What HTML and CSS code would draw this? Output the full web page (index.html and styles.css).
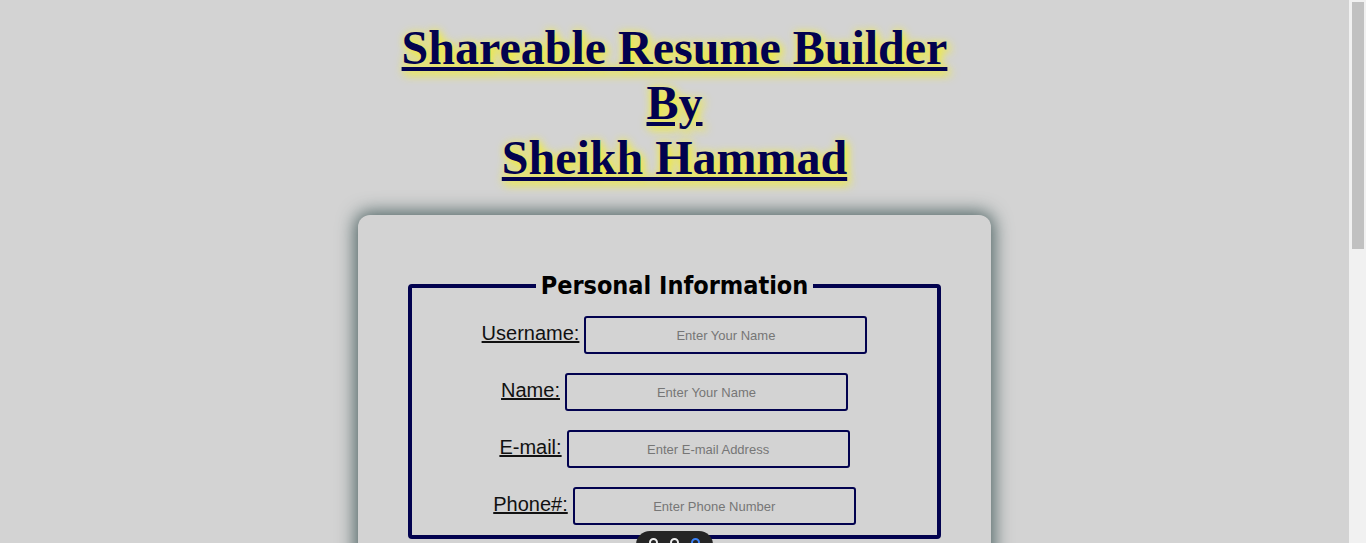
FILE: index.html
```html
<!DOCTYPE html>
<html lang="en">
<head>
    <meta charset="UTF-8">
    <meta name="viewport" content="width=device-width, initial-scale=1.0">
    <title>Shareable Resume Builder</title>
    <link rel="stylesheet" href="styles.css">
</head>
<body>
    <h1 class="title">Shareable Resume Builder<br>By<br>Sheikh Hammad</h1>
    <div class="container">
        <form id="resumeForm">
            <fieldset>
                <legend>Personal Information</legend>
                <div class="row">
                    <label for="username">Username:</label>
                    <input type="text" id="username" placeholder="Enter Your Name">
                </div>
                <div class="row">
                    <label for="name">Name:</label>
                    <input type="text" id="name" placeholder="Enter Your Name">
                </div>
                <div class="row">
                    <label for="email">E-mail:</label>
                    <input type="email" id="email" placeholder="Enter E-mail Address">
                </div>
                <div class="row">
                    <label for="phone">Phone#:</label>
                    <input type="tel" id="phone" placeholder="Enter Phone Number">
                </div>
            </fieldset>
            <fieldset>
                <legend>Education</legend>
                <div class="row">
                    <label for="degree">Degree:</label>
                    <input type="text" id="degree" placeholder="Enter Your Degree">
                </div>
                <div class="row">
                    <label for="school">School:</label>
                    <input type="text" id="school" placeholder="Enter School Name">
                </div>
            </fieldset>
        </form>
    </div>
    <div class="widget">
        <span class="dot"></span><span class="dot"></span><span class="dot blue"></span>
    </div>
    <div class="scrollbar"><div class="thumb"></div></div>
</body>
</html>
```
FILE: styles.css
```css
body {
    background-color: lightgray;
    margin: 8px 25px 8px 8px;
    font-family: 'Liberation Sans', Arial, sans-serif;
}
.title {
    font-family: 'Liberation Serif', 'Times New Roman', serif;
    font-size: 48px;
    font-weight: bold;
    line-height: 55px;
    text-align: center;
    color: #02024f;
    text-decoration: underline;
    text-shadow: 3px 4px 10px #f2ee2c, 0 0 8px #ebe760;
    margin: 12px 0 30px;
}
.container {
    width: 533px;
    margin: 0 auto 60px;
    padding: 56px 50px 40px;
    border-radius: 12px;
    box-shadow: 0 0 18px 3px #4e6464;
    background-color: lightgray;
}
fieldset {
    border: 4px solid #02024f;
    border-radius: 4px;
    margin: 0 0 30px;
    padding: 16px 0 10px;
    display: flex;
    flex-direction: column;
    align-items: center;
    gap: 19px;
}
legend {
    font-family: Tahoma, 'DejaVu Sans Condensed', 'DejaVu Sans', sans-serif;
    font-weight: bold;
    font-size: 25px;
    margin: 0 auto;
    padding: 0 5px;
    color: #000;
}
.row {
    display: flex;
    align-items: baseline;
    gap: 5px;
}
label {
    font-size: 20px;
    color: #111;
    text-decoration: underline;
}
input {
    width: 283px;
    height: 38px;
    box-sizing: border-box;
    border: 2px solid #02024f;
    border-radius: 3px;
    background-color: lightgray;
    font-family: 'Liberation Sans', Arial, sans-serif;
    font-size: 13px;
    text-align: center;
}
input::placeholder {
    color: #767676;
}
.widget {
    position: fixed;
    left: 636px;
    bottom: -20px;
    width: 77px;
    height: 32px;
    background-color: #252525;
    border-radius: 14px;
    display: flex;
    gap: 12px;
    justify-content: center;
    padding-top: 7px;
    box-sizing: border-box;
}
.dot {
    width: 9px;
    height: 9px;
    border-radius: 50%;
    border: 2px solid #eee;
    box-sizing: border-box;
}
.dot.blue {
    border-color: #3b82f6;
}
.scrollbar {
    position: fixed;
    top: 0;
    right: 0;
    width: 17px;
    height: 100%;
    background-color: #f1f1f1;
}
.thumb {
    margin: 2px 2px 0 3px;
    height: 247px;
    background-color: #c1c1c1;
}
```
